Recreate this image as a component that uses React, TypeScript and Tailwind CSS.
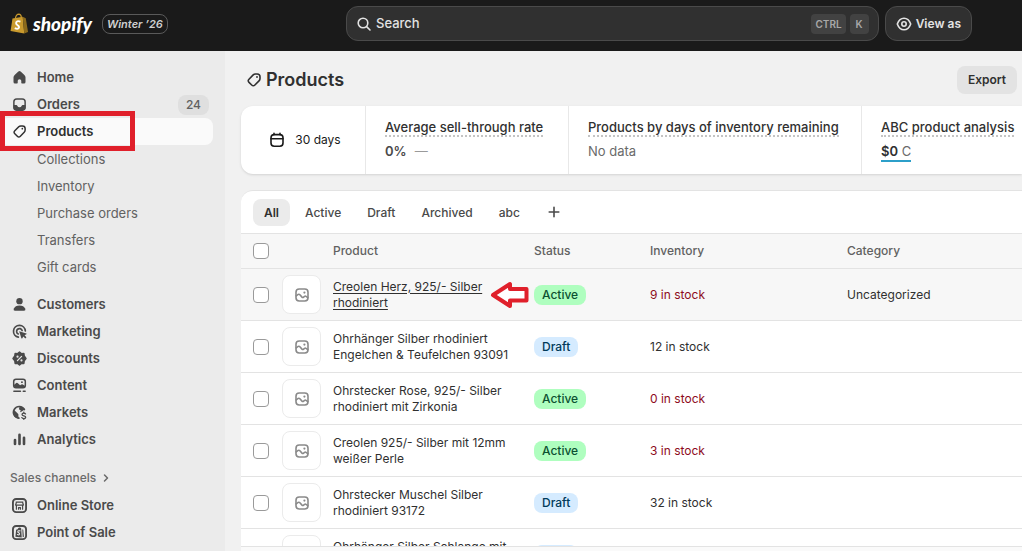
import React from "react";

type IconProps = { children: React.ReactNode; className?: string };

function Icon({ children, className = "size-4" }: IconProps) {
  return (
    <svg
      viewBox="0 0 16 16"
      fill="none"
      stroke="currentColor"
      strokeWidth="1.6"
      strokeLinecap="round"
      strokeLinejoin="round"
      className={`shrink-0 ${className}`}
      aria-hidden="true"
    >
      {children}
    </svg>
  );
}

const tag = (
  <>
    <path d="M9.4 2 H11.2 Q14 2 14 4.8 V6.4 Q14 7.9 13 8.9 L8.9 13 Q7.3 14.6 5.7 13 L3 10.4 Q1.4 8.8 3 7.2 L7.2 2.9 Q8.1 2 9.4 2 Z" />
    <circle cx="11" cy="5" r=".9" fill="currentColor" stroke="none" />
  </>
);

const icons = {
  home: (
    <path
      fill="currentColor"
      stroke="none"
      d="M6.8 1.6 Q8 .7 9.2 1.6 L13.2 5.2 Q14.4 6.3 14.4 7.8 V12.8 Q14.4 14.4 12.8 14.4 H10.6 Q9.9 14.4 9.9 13.7 V11.4 Q9.9 9.8 8 9.8 Q6.1 9.8 6.1 11.4 V13.7 Q6.1 14.4 5.4 14.4 H3.2 Q1.6 14.4 1.6 12.8 V7.8 Q1.6 6.3 2.8 5.2 Z"
    />
  ),
  orders: (
    <>
      <rect x="2" y="2" width="12" height="12" rx="3" />
      <path
        fill="currentColor"
        stroke="none"
        d="M1.6 8.6 H4.6 Q5.4 8.6 5.8 9.5 Q6.3 10.8 8 10.8 Q9.7 10.8 10.2 9.5 Q10.6 8.6 11.4 8.6 H14.4 V11 Q14.4 14.4 11 14.4 H5 Q1.6 14.4 1.6 11 Z"
      />
    </>
  ),
  products: tag,
  customers: (
    <g fill="currentColor" stroke="none">
      <circle cx="8" cy="4.4" r="3.4" />
      <path d="M1.8 12.6 Q3.4 9 8 9 Q12.6 9 14.2 12.6 Q14.8 14.6 12.8 14.6 H3.2 Q1.2 14.6 1.8 12.6 Z" />
    </g>
  ),
  marketing: (
    <>
      <path d="M6.8 14 A6.3 6.3 0 1 1 14.2 7.4" strokeWidth="1.8" />
      <path d="M6.7 10.6 A3 3 0 1 1 10.8 7" strokeWidth="1.8" />
      <path
        fill="currentColor"
        stroke="none"
        d="M7.6 7.6 L15.4 10 Q16 10.4 15.3 10.9 L13.4 12 L15.4 14 L14.2 15.4 L12.1 13.3 L11 15.2 Q10.4 15.9 10 15.2 Z"
      />
    </>
  ),
  discounts: (
    <>
      <path
        fill="currentColor"
        d="M8 1.2 L9.9 2.8 L12.6 2.6 L13 5.3 L14.9 8 L13 10.5 L12.6 13.3 L9.9 13.2 L8 14.9 L6.1 13.2 L3.4 13.3 L3 10.5 L1.1 8 L3 5.3 L3.4 2.6 L6.1 2.8 Z"
      />
      <g stroke="#ebebeb" strokeWidth="1.3">
        <path d="M5.8 10.2 L10.2 5.8" />
        <circle cx="5.9" cy="6" r=".5" />
        <circle cx="10.1" cy="10" r=".5" />
      </g>
    </>
  ),
  content: (
    <>
      <rect x="1.8" y="1.4" width="12.4" height="9" rx="2.4" />
      <path
        fill="currentColor"
        stroke="none"
        d="M2 7.4 L4.5 5.4 Q5.4 4.8 6.3 5.6 L8.6 7.8 L10 6.9 Q10.8 6.5 11.6 7 L14 8.4 L13.4 10.6 H2.6 Z"
      />
      <circle cx="10.6" cy="4.4" r="1" fill="currentColor" stroke="none" />
      <path d="M2 14 H9 M12 14 H14" />
    </>
  ),
  markets: (
    <>
      <path d="M7.4 14 A6.2 6.2 0 1 1 13.2 4.8" strokeWidth="1.8" />
      <path
        fill="currentColor"
        stroke="none"
        d="M2 5 L5.6 8.4 Q7.4 9.4 6.8 11.4 L7.2 14.6 Q1.4 13.6 1.4 8 Z M8 1.6 L7.4 4.6 L9.4 5.8 L8.4 7.6 L10.4 6.9 L13.8 4.6 Q11.4 1.4 8 1.6 Z"
      />
      <path
        d="M14.4 9.5 Q14 8.6 12.5 8.6 Q10.7 8.6 10.7 10 Q10.7 11.2 12.6 11.5 Q14.6 11.9 14.6 13.1 Q14.6 14.5 12.6 14.5 Q11 14.5 10.5 13.4 M12.6 7.7 V8.6 M12.6 14.5 V15.4"
        strokeWidth="1.4"
      />
    </>
  ),
  analytics: (
    <path d="M3.2 8.6 V12.8 M8 3 V12.8 M12.8 6.2 V12.8" strokeWidth="2.8" />
  ),
  store: (
    <>
      <rect x="1" y="1" width="14" height="14" rx="3.4" strokeWidth="2" />
      <path d="M4.4 4.3 H11.6 M3.8 7.4 L4.6 5 M12.2 7.4 L11.4 5 M3.8 7.5 H12.2 M4.7 8 V12 M11.3 8 V12 M7 12 V10.2 H9 V12" strokeWidth="1.3" />
    </>
  ),
  pos: (
    <>
      <rect x="1" y="1" width="14" height="14" rx="3.4" strokeWidth="2" />
      <path
        fill="currentColor"
        stroke="none"
        d="M4.4 5 L6 4.4 Q6.6 2.6 8 2.6 Q9.2 2.6 9.8 3.6 L10.4 13.4 L3.6 12.4 Z M11 4.4 L12 5 L12.7 12.6 L11.4 13 Z"
      />
      <path
        d="M8.5 6.3 Q6.3 5.7 6.2 7.1 Q6.2 7.9 7.2 8.3 Q8.3 8.9 8 9.8 Q7.5 10.9 5.8 10.2"
        stroke="#ebebeb"
        strokeWidth="1.2"
      />
    </>
  ),
};

const image = (
  <>
    <rect x="2" y="2" width="12" height="12" rx="3.2" />
    <circle cx="10.4" cy="5.6" r="1.1" fill="currentColor" stroke="none" />
    <path d="M2.2 8.8 L4.2 7.4 Q5.1 6.9 5.9 7.7 L8 10.1 Q8.8 10.9 9.6 10.1 L10.6 9.3 Q11.3 8.8 12 9.3 L13.8 10.6" />
  </>
);

const subItems = [
  "Collections",
  "Inventory",
  "Purchase orders",
  "Transfers",
  "Gift cards",
];

const storeItems = [
  { label: "Customers", icon: icons.customers },
  { label: "Marketing", icon: icons.marketing },
  { label: "Discounts", icon: icons.discounts },
  { label: "Content", icon: icons.content },
  { label: "Markets", icon: icons.markets },
  { label: "Analytics", icon: icons.analytics },
];

const channels = [
  { label: "Online Store", icon: icons.store },
  { label: "Point of Sale", icon: icons.pos },
];

const tabs = ["All", "Active", "Draft", "Archived", "abc"];

const products = [
  { name: "Creolen Herz, 925/- Silber rhodiniert", active: true, stock: 9, category: "Uncategorized" },
  { name: "Ohrhänger Silber rhodiniert Engelchen & Teufelchen 93091", active: false, stock: 12 },
  { name: "Ohrstecker Rose, 925/- Silber rhodiniert mit Zirkonia", active: true, stock: 0 },
  { name: "Creolen 925/- Silber mit 12mm weißer Perle", active: true, stock: 3 },
  { name: "Ohrstecker Muschel Silber rhodiniert 93172", active: false, stock: 32 },
  { name: "Ohrhänger Silber Schlange mit", active: false },
];

type NavItemProps = {
  label: string;
  icon: React.ReactNode;
  count?: number;
  selected?: boolean;
};

function NavItem({ label, icon, count, selected }: NavItemProps) {
  return (
    <li className="relative">
      <a
        href="#"
        className={`flex h-[27px] items-center gap-[10px] rounded-lg pr-1 pl-3 font-semibold ${
          selected ? "bg-[#fafafa] text-[#303030]" : "text-[#4a4a4a]"
        }`}
      >
        <Icon className="size-[15px]">{icon}</Icon>
        {label}
        {count && (
          <span className="ml-auto rounded-lg bg-[#dfdfdf] px-2 text-xs leading-5 font-medium text-[#616161]">
            {count}
          </span>
        )}
      </a>
      {selected && (
        <div className="pointer-events-none absolute -top-[7px] left-0 z-10 h-10 w-[135px] border-5 border-[#e0202b]" />
      )}
    </li>
  );
}

function Sidebar() {
  return (
    <nav className="w-[225px] shrink-0 overflow-hidden bg-[#ebebeb] pt-[13px] pr-3 text-[13px]">
      <ul>
        <NavItem label="Home" icon={icons.home} />
        <NavItem label="Orders" icon={icons.orders} count={24} />
        <NavItem label="Products" icon={icons.products} selected />
      </ul>
      <ul className="mt-px">
        {subItems.map((item) => (
          <li key={item}>
            <a
              href="#"
              className="flex h-[27px] items-center pl-[37px] text-[#616161]"
            >
              {item}
            </a>
          </li>
        ))}
      </ul>
      <ul className="mt-[10px]">
        {storeItems.map((item) => (
          <NavItem key={item.label} {...item} />
        ))}
      </ul>
      <button className="mt-[10px] flex h-[29px] items-center gap-1 pl-[10px] text-xs font-medium text-[#6a6a6a]">
        Sales channels
        <Icon className="size-3">
          <path d="M6 4 L10 8 L6 12" strokeWidth="2" />
        </Icon>
      </button>
      <ul>
        {channels.map((item) => (
          <NavItem key={item.label} {...item} />
        ))}
      </ul>
    </nav>
  );
}

function Header() {
  return (
    <header className="flex h-[51px] shrink-0 items-center bg-[#1a1a1a] pr-[50px] pb-1">
      <div className="flex w-[346px] shrink-0 items-center pl-[10px]">
        <svg viewBox="0 0 20 22" className="h-[21px] w-[19px]" aria-hidden="true">
          <path d="M2.6 5.8 L13.4 3.8 L15 21.4 L.6 19 Z" fill="#c99a2e" />
          <path d="M13.4 3.8 L16.6 5.6 L19 20 L15 21.4 Z" fill="#8c6a1c" />
          <path d="M5.6 5.8 Q6.4 1.3 9.4 1.2 Q11.6 1.2 12 4.6" fill="none" stroke="#c99a2e" strokeWidth="1.2" />
          <path
            d="M11 9 Q6.6 7.6 6.4 10.6 Q6.4 11.9 8 12.8 Q10 14 9.3 15.6 Q8.4 17.4 5 15.9"
            fill="none"
            stroke="#fff"
            strokeWidth="2"
          />
        </svg>
        <span className="ml-1 font-['Lato'] text-[19px] leading-6 font-black text-white italic">
          shopify
        </span>
        <span className="ml-[10px] rounded-lg border border-[#5a5a5a] px-1 text-[11px] leading-[18px] font-semibold text-[#d0d0d0] italic">
          Winter ’26
        </span>
      </div>
      <label className="flex h-[35px] flex-1 items-center gap-1 rounded-xl border border-[#4a4a4a] bg-[#303030] px-[9px] text-[#e3e3e3]">
        <Icon>
          <circle cx="7" cy="7" r="4.8" />
          <path d="M10.6 10.6 L14 14" />
        </Icon>
        <input
          type="text"
          aria-label="Search"
          placeholder="Search"
          className="min-w-0 flex-1 bg-transparent text-[13px] font-medium outline-none placeholder:text-[#e3e3e3]"
        />
        <kbd className="rounded-sm bg-[#424242] px-1 font-['Inter',sans-serif] text-[10px] leading-5 font-semibold text-[#a8a8a8]">
          CTRL
        </kbd>
        <kbd className="rounded-sm bg-[#424242] px-[6px] font-['Inter',sans-serif] text-[10px] leading-5 font-semibold text-[#a8a8a8]">
          K
        </kbd>
      </label>
      <button className="ml-[6px] flex h-[35px] items-center gap-1 rounded-xl border border-[#4a4a4a] bg-[#303030] px-[10px] text-xs font-semibold text-[#e3e3e3]">
        <Icon>
          <circle cx="8" cy="8" r="2.2" />
          <path d="M1.3 8 Q3.4 2.2 8 2.2 Q12.6 2.2 14.7 8 Q12.6 13.8 8 13.8 Q3.4 13.8 1.3 8 Z" />
        </Icon>
        View as
      </button>
    </header>
  );
}

function Stat({ label, className, children }: { label: string; className: string; children: React.ReactNode }) {
  return (
    <div className={`border-l border-[#e8e8e8] pt-[13px] pl-[19px] ${className}`}>
      <div className="w-fit border-b-2 border-dotted border-[#c4c4c4] leading-4 font-medium whitespace-nowrap">
        {label}
      </div>
      <div className="mt-[5px] w-fit leading-[18px] text-[#6a6a6a]">{children}</div>
    </div>
  );
}

function Checkbox({ label }: { label: string }) {
  return (
    <input
      type="checkbox"
      aria-label={label}
      className="ml-3 block size-4 appearance-none rounded-sm border border-[#9a9a9a] bg-white"
    />
  );
}

function Arrow() {
  return (
    <svg
      viewBox="0 0 39 28"
      className="absolute top-3 right-[5px] h-7 w-[39px]"
      aria-hidden="true"
    >
      <path
        d="M3 14 L20 3 V8 H36.5 V19.5 H20 V25 Z"
        fill="#fff"
        stroke="#e0202b"
        strokeWidth="4"
        strokeLinejoin="round"
      />
    </svg>
  );
}

function ProductTable() {
  return (
    <table className="w-full table-fixed border-collapse text-left text-xs">
      <colgroup>
        <col className="w-[41px]" />
        <col className="w-[51px]" />
        <col className="w-[201px]" />
        <col className="w-[116px]" />
        <col className="w-[197px]" />
        <col />
      </colgroup>
      <thead>
        <tr className="h-[35px] border-y border-[#e3e3e3] bg-[#f7f7f7] text-[#616161]">
          <th>
            <Checkbox label="Select all" />
          </th>
          <th />
          <th className="font-medium">Product</th>
          <th className="font-medium">Status</th>
          <th className="font-medium">Inventory</th>
          <th className="font-medium">Category</th>
        </tr>
      </thead>
      <tbody>
        {products.map((p, i) => (
          <tr
            key={p.name}
            className={`h-[52px] border-b border-[#e3e3e3] ${i === 0 ? "bg-[#f7f7f7]" : ""}`}
          >
            <td>
              <Checkbox label={p.name} />
            </td>
            <td>
              <div className="flex size-[39px] items-center justify-center rounded-lg border border-[#ebebeb] bg-white text-[#8a8a8a]">
                <Icon>{image}</Icon>
              </div>
            </td>
            <td className="relative h-[52px] pr-6">
              <a href="#" className={`block h-8 leading-4 ${i === 0 ? "underline underline-offset-2" : ""}`}>
                {p.name}
              </a>
              {i === 0 && <Arrow />}
            </td>
            <td>
              <span
                className={`inline-block rounded-lg px-2 leading-5 font-medium ${
                  p.active ? "bg-[#affebf] text-[#0c5132]" : "bg-[#d5ebff] text-[#003a5a]"
                }`}
              >
                {p.active ? "Active" : "Draft"}
              </span>
            </td>
            <td className={p.stock !== undefined && p.stock < 10 ? "text-[#8e0b21]" : ""}>
              {p.stock !== undefined && `${p.stock} in stock`}
            </td>
            <td>{p.category}</td>
          </tr>
        ))}
      </tbody>
    </table>
  );
}

export default function App() {
  return (
    <div className="h-screen bg-white pr-[2px] pb-px font-['Inter',sans-serif] text-[#303030]">
      <div className="flex h-full flex-col overflow-hidden">
        <Header />
        <div className="flex min-h-0 flex-1">
          <Sidebar />
          <main className="flex min-w-0 flex-1 flex-col bg-[#f1f1f1] pl-4">
            <div className="flex h-[55px] shrink-0 items-center pt-[3px] pr-[5px] pl-[5px]">
              <Icon>{tag}</Icon>
              <h1 className="ml-1 text-lg font-semibold">Products</h1>
              <button className="ml-auto rounded-lg bg-[#e3e3e3] px-[11px] text-xs leading-7 font-semibold">
                Export
              </button>
            </div>
            <section className="flex h-[68px] shrink-0 overflow-hidden rounded-l-xl bg-white text-[13px] shadow-sm">
              <button className="flex w-[124px] shrink-0 items-center justify-center gap-[10px] pl-1 text-xs text-[#1a1a1a]">
                <Icon>
                  <rect x="2" y="2.6" width="12" height="11.6" rx="3.2" />
                  <path d="M2 6.8 H14 M5 1.4 V2.6 M11 1.4 V2.6" />
                </Icon>
                30 days
              </button>
              <Stat label="Average sell-through rate" className="w-[203px] shrink-0">
                <span className="font-semibold text-[#4a4a4a]">0%</span>
                <span className="ml-2 text-[#9a9a9a]">—</span>
              </Stat>
              <Stat label="Products by days of inventory remaining" className="w-[293px] shrink-0">
                No data
              </Stat>
              <Stat label="ABC product analysis" className="min-w-0 flex-1">
                <div className="border-b-2 border-[#2c9fc9]">
                  <span className="font-semibold text-[#303030]">$0</span> C
                </div>
              </Stat>
            </section>
            <section className="mt-4 min-h-0 flex-1 overflow-hidden rounded-tl-xl border-t border-[#e3e3e3] bg-white">
              <div className="flex h-[42px] items-center gap-1 pl-3 text-xs font-medium text-[#4a4a4a]">
                {tabs.map((tab, i) => (
                  <button
                    key={tab}
                    className={`rounded-lg px-[11px] leading-[27px] ${
                      i === 0 ? "bg-[#ebebeb] font-semibold text-[#303030]" : ""
                    }`}
                  >
                    {tab}
                  </button>
                ))}
                <button aria-label="Add view" className="px-[11px]">
                  <Icon>
                    <path d="M8 3.2 V12.8 M3.2 8 H12.8" />
                  </Icon>
                </button>
              </div>
              <ProductTable />
            </section>
            <div className="h-[5px] shrink-0 border-t border-[#e3e3e3] bg-[#fafafa]" />
          </main>
        </div>
      </div>
    </div>
  );
}
